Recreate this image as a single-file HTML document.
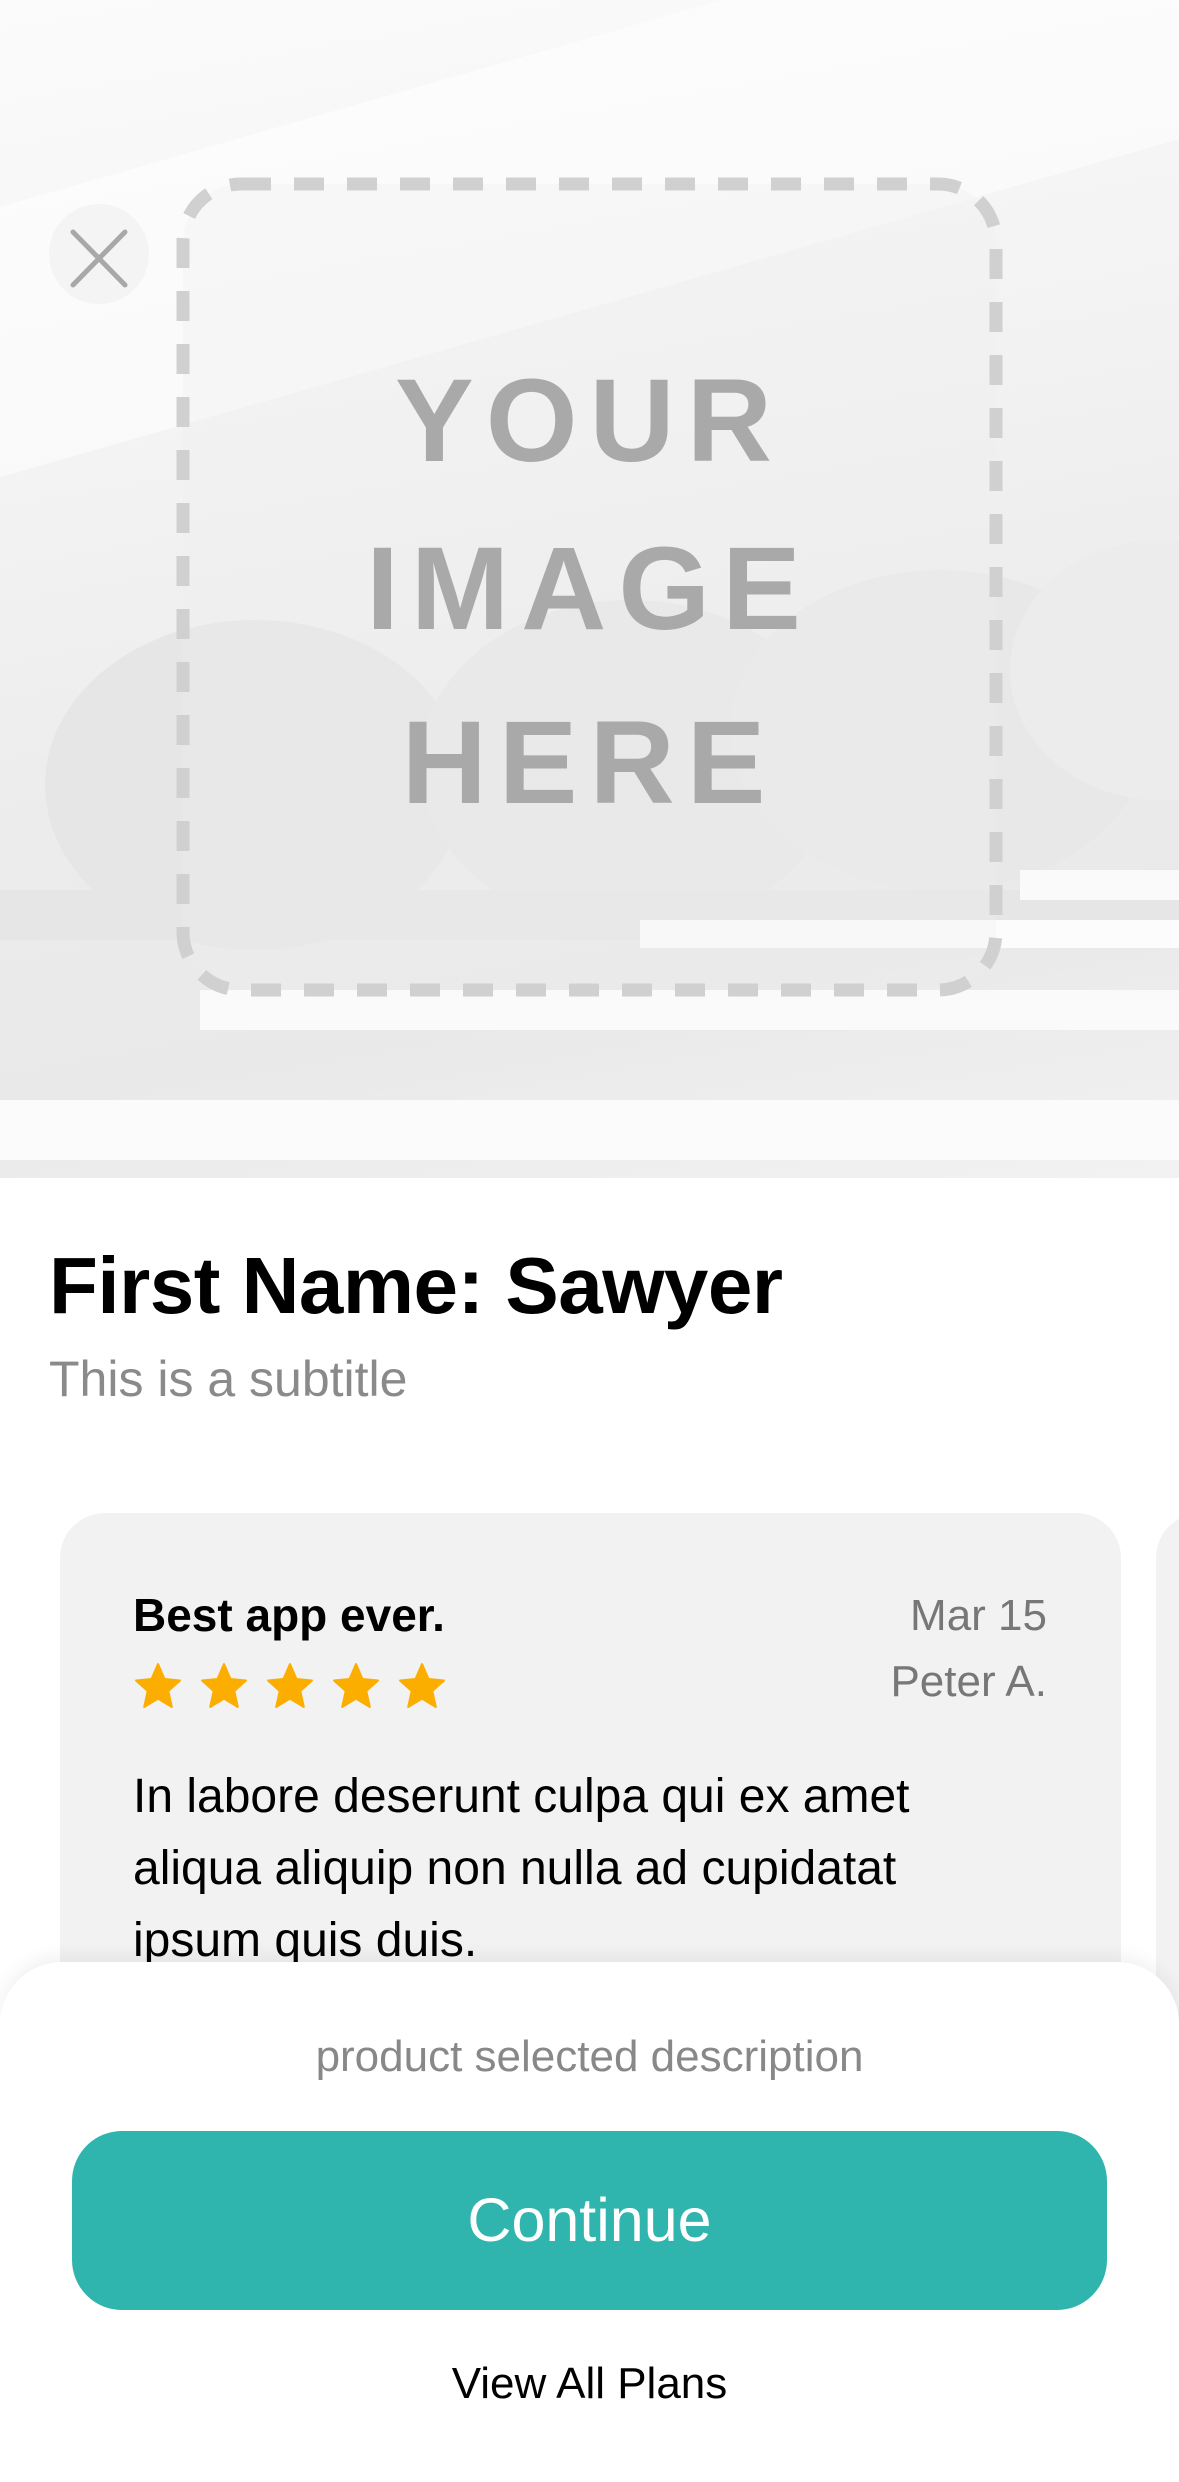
<!DOCTYPE html>
<html><head><meta charset="utf-8"><style>
*{margin:0;padding:0;box-sizing:border-box}
body{width:1179px;height:2454px;position:relative;overflow:hidden;background:#fff;font-family:"Liberation Sans",sans-serif}
.hero{position:absolute;left:0;top:0;width:1179px;height:1178px;overflow:hidden;background:linear-gradient(170deg,#fbfbfb 0%,#f3f3f3 35%,#ececec 60%,#e9e9e9 80%,#f2f2f2 100%)}
.abs{position:absolute}
.ph{position:absolute;left:0;width:1179px;text-align:center;font-weight:bold;font-size:118px;letter-spacing:12px;color:#a9a9a9;line-height:1}
.t{position:absolute;white-space:nowrap}
</style></head><body>
<div class="hero">
  <div class="abs" style="left:-200px;top:40px;width:1600px;height:260px;background:rgba(255,255,255,0.5);transform:rotate(-16deg)"></div>
  <div class="abs" style="left:45px;top:620px;width:420px;height:330px;border-radius:50%;background:#e6e6e6"></div>
  <div class="abs" style="left:420px;top:600px;width:420px;height:330px;border-radius:50%;background:#e7e7e7"></div>
  <div class="abs" style="left:730px;top:570px;width:420px;height:320px;border-radius:50%;background:#e8e8e8"></div>
  <div class="abs" style="left:1010px;top:540px;width:300px;height:260px;border-radius:50%;background:#ececec"></div>
  <div class="abs" style="left:0;top:890px;width:1179px;height:50px;background:#e6e6e6"></div>
  <div class="abs" style="left:1020px;top:870px;width:160px;height:30px;background:#fafafa"></div>
  <div class="abs" style="left:640px;top:920px;width:540px;height:28px;background:#fcfcfc"></div>
  <div class="abs" style="left:200px;top:990px;width:980px;height:40px;background:#fafafa"></div>
  <div class="abs" style="left:0;top:1100px;width:1179px;height:60px;background:#fbfbfb"></div>
  <svg class="abs" style="left:0;top:0" width="1179" height="1178">
    <rect x="183" y="184" width="813" height="806" rx="58" fill="rgba(240,240,240,0.3)" stroke="#d0d0d0" stroke-width="13" stroke-dasharray="30 23"/>
    <circle cx="99" cy="254" r="50" fill="#f2f2f2" fill-opacity="0.8"/>
    <path d="M73 232 L125 285 M125 232 L73 285" stroke="#a8a8a8" stroke-width="5" stroke-linecap="round"/>
  </svg>
  <div class="ph" style="top:362px">YOUR</div>
  <div class="ph" style="top:530px">IMAGE</div>
  <div class="ph" style="top:704px">HERE</div>
</div>
<div class="t" style="left:49px;top:1240px;font-size:80px;font-weight:bold;color:#000;letter-spacing:-0.5px">First Name: Sawyer</div>
<div class="t" style="left:49px;top:1350px;font-size:50px;color:#8a8a8a">This is a subtitle</div>

<div class="abs" style="left:60px;top:1513px;width:1061px;height:600px;border-radius:45px;background:#f2f2f2"></div>
<div class="abs" style="left:1156px;top:1513px;width:100px;height:600px;border-radius:45px;background:#f2f2f2"></div>
<div class="t" style="left:133px;top:1588px;font-size:46px;font-weight:bold;color:#000">Best app ever.</div>
<div class="t" style="right:132px;top:1591px;font-size:44px;color:#777">Mar 15</div>
<div class="t" style="right:132px;top:1657px;font-size:44px;color:#777">Peter A.</div>
<svg class="abs" style="left:134px;top:1662px" width="330" height="52" viewBox="0 0 330 52">
  <defs><path id="s" d="M24 2 L30.5 17 L46 18.5 L34.3 29 L37.8 45 L24 36.7 L10.2 45 L13.7 29 L2 18.5 L17.5 17 Z" fill="#FBAE00" stroke="#FBAE00" stroke-width="2" stroke-linejoin="round"/></defs>
  <use href="#s" x="0"/><use href="#s" x="66"/><use href="#s" x="132"/><use href="#s" x="198"/><use href="#s" x="264"/>
</svg>
<div class="abs" style="left:133px;top:1761px;font-size:48px;line-height:72px;color:#000;width:950px">In labore deserunt culpa qui ex amet<br>aliqua aliquip non nulla ad cupidatat<br>ipsum quis duis.</div>

<div class="abs" style="left:0;top:1962px;width:1179px;height:520px;background:#fff;border-radius:62px 62px 0 0;box-shadow:0 -6px 18px rgba(0,0,0,0.06)"></div>
<div class="t" style="left:0;width:1179px;text-align:center;top:2032px;font-size:44px;color:#888">product selected description</div>
<div class="abs" style="left:72px;top:2131px;width:1035px;height:179px;border-radius:50px;background:#2FB5AD;color:#fff;font-size:61px;text-align:center;line-height:179px">Continue</div>
<div class="t" style="left:0;width:1179px;text-align:center;top:2359px;font-size:44px;color:#000">View All Plans</div>
</body></html>
